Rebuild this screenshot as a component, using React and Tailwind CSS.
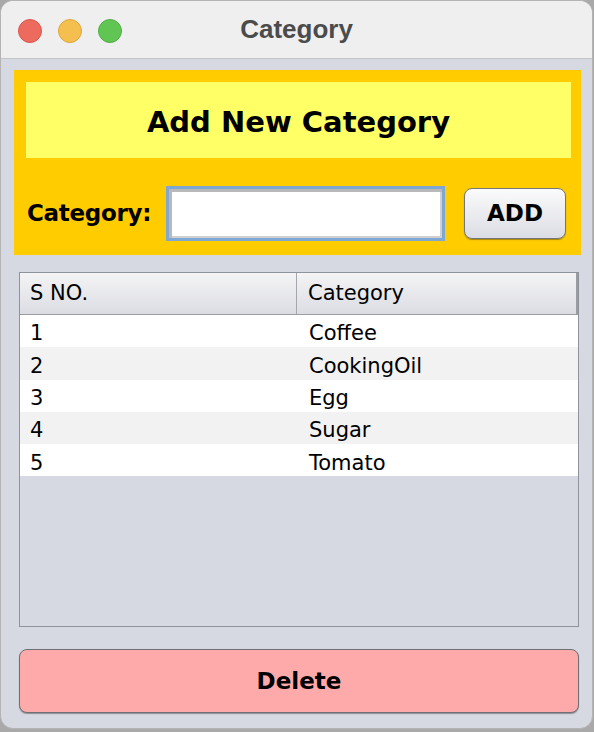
const rows = [
  { id: 1, name: "Coffee" },
  { id: 2, name: "CookingOil" },
  { id: 3, name: "Egg" },
  { id: 4, name: "Sugar" },
  { id: 5, name: "Tomato" },
];

const ui = { fontFamily: '"DejaVu Sans", Verdana, sans-serif' };

function TrafficLights() {
  return (
    <div className="flex items-center gap-[16px] pl-[17px] pt-[2px]">
      <span className="w-[24px] h-[24px] rounded-full bg-[#ed6a5e] border border-[#d8574c]" />
      <span className="w-[24px] h-[24px] rounded-full bg-[#f5bf4f] border border-[#dca73c]" />
      <span className="w-[24px] h-[24px] rounded-full bg-[#61c554] border border-[#52ad45]" />
    </div>
  );
}

export default function App() {
  return (
    <div className="w-[594px] h-[732px] bg-[#a9a9a9] overflow-hidden">
      <div className="w-[593px] h-[729px] rounded-[13px] border border-[#b4b4b4] bg-[#d6d9e1] overflow-hidden flex flex-col">
        {/* Title bar */}
        <div className="relative h-[58px] shrink-0 bg-[#f0eff0] border-b border-[#c4c4c6] flex items-center">
          <TrafficLights />
          <div
            className="absolute inset-0 flex items-center justify-center text-[26px] font-bold text-[#4b4b4b]"
            style={{ fontFamily: '"Liberation Sans", Arial, sans-serif' }}
          >
            Category
          </div>
        </div>

        {/* Content */}
        <div className="flex flex-col pl-[13px] pr-[11px] pt-[11px]" style={ui}>
          {/* Add panel */}
          <div className="bg-[#ffcc00] pt-[12px] pl-[12px] pr-[10px] pb-[14px]">
            <div className="h-[76px] pt-[5px] bg-[#ffff66] flex items-center justify-center text-[29px] font-bold text-black">
              Add New Category
            </div>
            <div className="flex items-center mt-[28px]">
              <span className="text-[23px] font-bold text-black ml-[1px] w-[139px] tracking-[-0.3px]">Category:</span>
              <div className="w-[279px] h-[55px] border-[3px] border-[#7ea7d3] bg-white shadow-[inset_2px_2px_0_1px_#b9b9b9,inset_-1px_-1px_0_1px_#d0d0d0]" />
              <button className="ml-[19px] w-[102px] h-[51px] rounded-[8px] border-[1.5px] border-[#74767c] bg-gradient-to-b from-[#fbfbfc] to-[#dcdde4] shadow-[0_1px_1px_rgba(0,0,0,0.35)] text-[23px] font-bold text-black">
                ADD
              </button>
            </div>
          </div>

          {/* Table */}
          <div className="mt-[17px] ml-[5px] mr-[2px] h-[355px] border border-[#8e939b] flex flex-col">
            <div className="h-[42px] flex bg-gradient-to-b from-[#f4f4f6] to-[#dcdde3] border-b border-[#9a9ca2] text-[21px] text-black">
              <div className="w-[277px] flex items-center pl-[10px] border-r border-[#a4a6ab]">S NO.</div>
              <div className="flex-1 flex items-center pl-[11px] border-r-[2px] border-[#9a9ca2]">Category</div>
            </div>
            {rows.map((r, i) => (
              <div
                key={r.id}
                className={`h-[32.3px] pt-[6px] flex items-center text-[21px] text-black ${i % 2 === 0 ? "bg-white" : "bg-[#f2f2f2]"}`}
              >
                <div className="w-[277px] pl-[10px]">{r.id}</div>
                <div className="flex-1 pl-[12px]">{r.name}</div>
              </div>
            ))}
          </div>

          {/* Delete */}
          <button className="mt-[22px] ml-[5px] mr-[2px] h-[64px] rounded-[8px] border-[1.5px] border-[#6e7075] bg-[#ffaaaa] shadow-[0_1px_1px_rgba(0,0,0,0.35)] text-[23px] font-bold text-black">
            Delete
          </button>
        </div>
      </div>
    </div>
  );
}
